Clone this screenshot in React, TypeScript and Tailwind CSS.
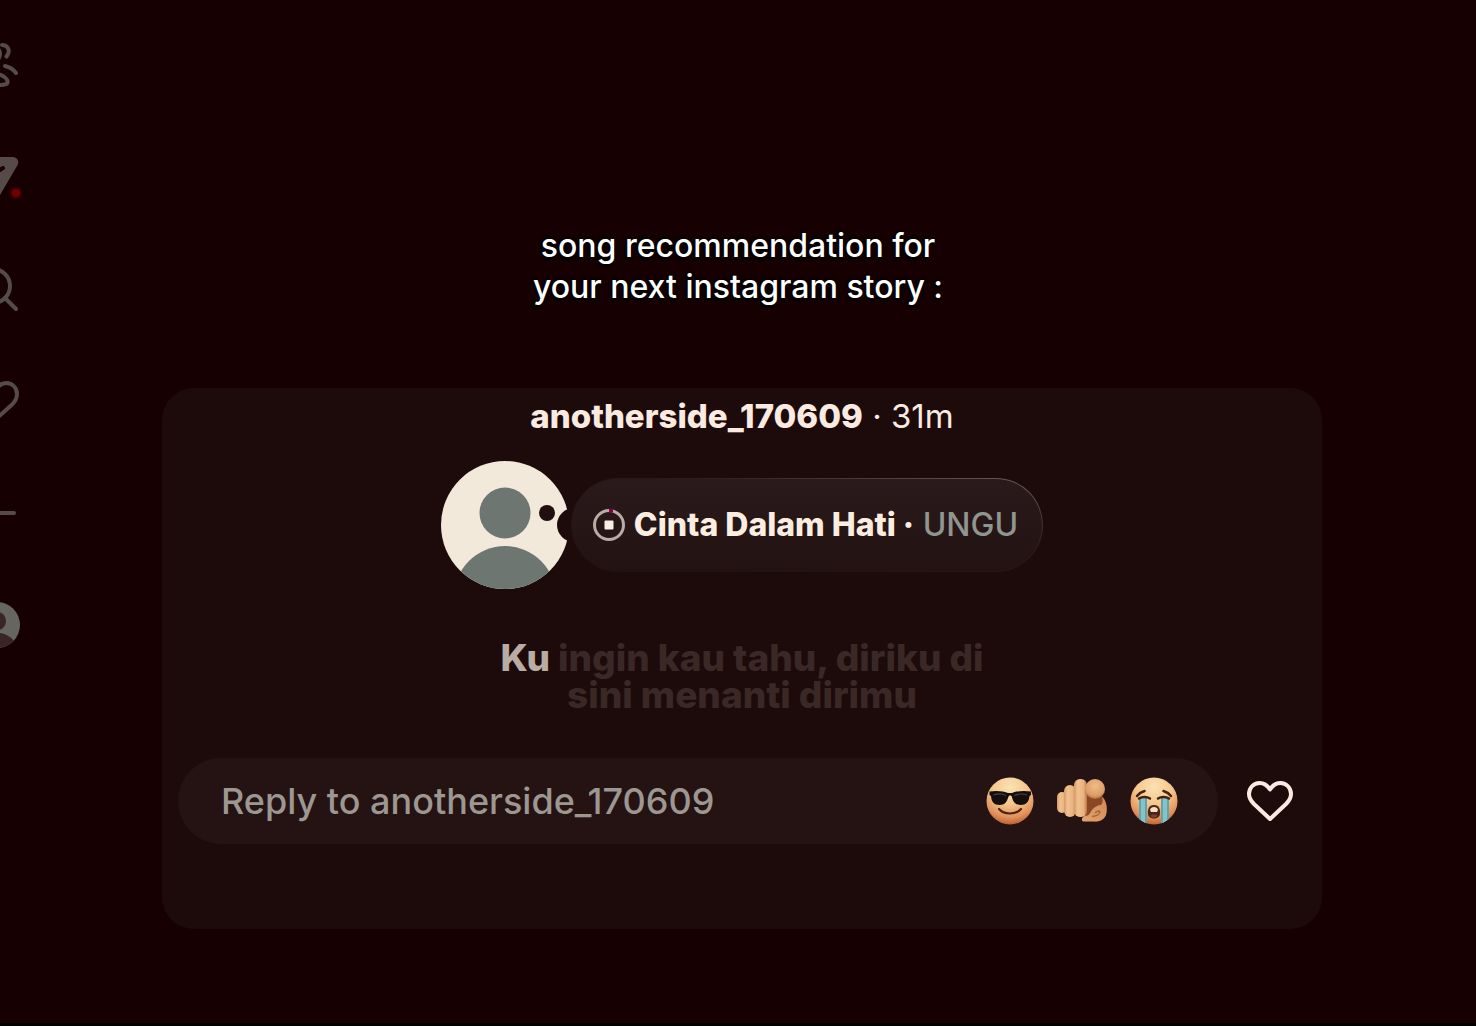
import type { ReactNode } from "react";

function NavButton({ label, children }: { label: string; children: ReactNode }) {
  return (
    <button type="button" aria-label={label} className="flex h-28 w-full items-center justify-end text-[#574b49]">
      <svg
        width="52"
        height="48"
        viewBox="-28 -24 52 48"
        fill="none"
        stroke="currentColor"
        strokeWidth="4"
        strokeLinecap="round"
        strokeLinejoin="round"
        className="shrink-0"
      >
        {children}
      </svg>
    </button>
  );
}

function SideNav() {
  return (
    <nav className="flex w-6 shrink-0 flex-col overflow-hidden pt-[9px]">
      <NavButton label="Friends">
        <circle cx="-8" cy="-11" r="8" />
        <path d="M2 -20C7 -20 9.500 -16 8.500 -12.500C8 -10.500 7 -9.500 6.500 -8.500M5 1C9.500 2 13.500 4.500 16 8M-20 16C-18 9 -11 7 -5 8C2 10 7 13 7.500 16.500C8 19 5 20 -1 20H-16C-19 20 -21 19 -20 16Z" />
      </NavButton>
      <NavButton label="Messages">
        <path
          d="M-22 -20H12C17.500 -20 20 -15.500 17 -11L-3 23C-5 26 -9 25 -10 22L-13 5L-25 -10C-28 -14 -26 -20 -22 -20Z"
          fill="currentColor"
          stroke="none"
        />
        <path d="M3 -9L-12 0" stroke="#160002" />
        <circle cx="16" cy="16" r="5" fill="#6e0007" stroke="#3c0004" strokeWidth="2" />
      </NavButton>
      <NavButton label="Search">
        <circle cx="-7" cy="-3" r="17" />
        <path d="M5 9L16 20" />
      </NavButton>
      <NavButton label="Activity">
        <path d="M-4 18L11 4.500C15 1 17 -3 17 -7C17 -13 12.500 -18 6.500 -18C2 -18 -2 -15 -4 -11C-6 -15 -10 -18 -14.500 -18C-20.500 -18 -25 -13 -25 -7C-25 -3 -23 1 -19 4.500Z" />
      </NavButton>
      <NavButton label="Menu">
        <path d="M-22 0H14" />
      </NavButton>
      <NavButton label="Profile">
        <circle cx="-3" cy="0" r="23" fill="#666661" stroke="none" />
        <circle cx="-3.500" cy="-4" r="9.500" fill="#382524" stroke="none" />
        <path d="M-19 17C-11 5 5 5 14 16C5 25 -11 25 -19 17Z" fill="#382524" stroke="none" />
      </NavButton>
    </nav>
  );
}

function Avatar() {
  return (
    <svg width="128" height="128" viewBox="0 0 128 128" role="img" aria-label="anotherside_170609" className="shrink-0">
      <defs>
        <clipPath id="avatar-round">
          <circle cx="64" cy="64" r="64" />
        </clipPath>
      </defs>
      <g clipPath="url(#avatar-round)">
        <rect width="128" height="128" fill="#f3e9db" />
        <circle cx="64" cy="52" r="25.500" fill="#6e7671" />
        <circle cx="64" cy="136" r="51" fill="#6e7671" />
      </g>
      <circle cx="133" cy="64" r="17" fill="#1d0b0b" />
      <circle cx="106" cy="52" r="8" fill="#210e0e" />
    </svg>
  );
}

function PlayingIcon() {
  return (
    <svg width="34" height="34" viewBox="0 0 34 34" fill="none" className="shrink-0">
      <circle cx="17" cy="17" r="14.500" stroke="#b8aba8" strokeWidth="3" />
      <path d="M17 2.500H21" stroke="#85003c" strokeWidth="4" />
      <rect x="12.500" y="12.500" width="9" height="9" rx="1" fill="#fbeee4" />
    </svg>
  );
}

function FaceGradient({ id }: { id: string }) {
  return (
    <radialGradient id={id} cx="0.5" cy="0.2" r="0.82">
      <stop offset="0" stopColor="#fae2b4" />
      <stop offset="0.45" stopColor="#f5c78c" />
      <stop offset="0.8" stopColor="#e0905a" />
      <stop offset="1" stopColor="#b9592b" />
    </radialGradient>
  );
}

function CoolFace() {
  return (
    <svg width="48" height="48" viewBox="0 0 48 48">
      <defs>
        <FaceGradient id="cool-face" />
      </defs>
      <circle cx="24" cy="24" r="23.500" fill="url(#cool-face)" />
      <path
        d="M3.500 14.500C10 13.300 18 14 22 16H26C30 14 38 13.300 45 14.500V18L43.500 19C43 25 40 28 34.500 28C29 28 27 24.500 25.800 19.500C25.300 18 23 18 22.500 19.500C21 24.500 19 28 13.500 28C8 28 5.500 25 5 19L3.500 18Z"
        fill="#150d0e"
      />
      <path d="M7.500 18C12 16.500 17 17 20 18.500M28.500 18.500C32 17 37 16.500 41 18" stroke="#4b4444" strokeWidth="1.200" fill="none" />
      <path d="M13 32C18 38 30 38 35 32" stroke="#4d2413" strokeWidth="2.200" fill="none" strokeLinecap="round" />
    </svg>
  );
}

function PointingHand() {
  return (
    <svg width="52" height="48" viewBox="0 0 52 48">
      <defs>
        <linearGradient id="hand-finger" x1="0" x2="1" y1="0" y2="0">
          <stop offset="0" stopColor="#d79a63" />
          <stop offset="0.3" stopColor="#f0c190" />
          <stop offset="0.75" stopColor="#e9b27d" />
          <stop offset="1" stopColor="#b97445" />
        </linearGradient>
        <radialGradient id="hand-tip" cx="0.5" cy="0.35" r="0.7">
          <stop offset="0" stopColor="#f0bd88" />
          <stop offset="0.7" stopColor="#dc9d66" />
          <stop offset="1" stopColor="#a55f34" />
        </radialGradient>
        <linearGradient id="hand-thumb" x1="0" x2="1" y1="1" y2="0">
          <stop offset="0" stopColor="#e2a56e" />
          <stop offset="1" stopColor="#cf8a55" />
        </linearGradient>
      </defs>
      <path d="M28 18H45C50 22 52 30 50 37C48 43 43 45 37 44H26L28 36Z" fill="#8a4924" />
      <path
        d="M46 20C50 23 52 31 50 38C48 43 43 45 37 44.500H27C25 43 26 40 29 39C33 39 34 36 36 33C38 30 42 28 45 28C47 26 47 23 46 20Z"
        fill="url(#hand-thumb)"
      />
      <path d="M39 36C41 34 43 33.500 44 35C43.500 38 40 39 36 39.500" stroke="#a9643a" strokeWidth="1.500" fill="none" />
      <rect x="1" y="15" width="10" height="21" rx="5" fill="url(#hand-finger)" />
      <rect x="8" y="8" width="12" height="32" rx="6" fill="url(#hand-finger)" />
      <rect x="18" y="2" width="13" height="38" rx="6" fill="url(#hand-finger)" />
      <ellipse cx="39" cy="12" rx="10" ry="10" fill="url(#hand-tip)" />
    </svg>
  );
}

function CryingFace() {
  return (
    <svg width="48" height="48" viewBox="0 0 48 48">
      <defs>
        <FaceGradient id="crying-face" />
        <clipPath id="crying-clip">
          <circle cx="24" cy="24" r="23.500" />
        </clipPath>
      </defs>
      <g clipPath="url(#crying-clip)">
        <rect width="48" height="48" fill="url(#crying-face)" />
        <rect x="9" y="21" width="8" height="27" fill="#5fa5b0" />
        <rect x="11" y="21" width="4" height="27" fill="#86c3c9" />
        <rect x="31" y="21" width="8" height="27" fill="#5fa5b0" />
        <rect x="33" y="21" width="4" height="27" fill="#86c3c9" />
      </g>
      <path
        d="M7 19C9 16.500 11 15 14.500 14M41 19C39 16.500 37 15 33.500 14M9 21.500C12 19.500 17 19.500 20 21.500M28 21.500C31 19.500 36 19.500 39 21.500"
        stroke="#46210f"
        strokeWidth="2.500"
        fill="none"
        strokeLinecap="round"
      />
      <path d="M24 28C29.500 28 30.500 33 30 37C29.500 43 18.500 43 18 37C17.500 33 18.500 28 24 28Z" fill="#4c2418" />
      <path d="M20 33C20.500 29 27.500 29 28 33L27 35H21Z" fill="#f2dfc4" />
      <path d="M20.500 39C22 37 26 37 27.500 39C26 41 22 41 20.500 39Z" fill="#84402c" />
    </svg>
  );
}

function HeartIcon() {
  return (
    <svg width="48" height="48" viewBox="0 0 48 48" fill="none" stroke="#fbeae3" strokeWidth="4" strokeLinecap="round" strokeLinejoin="round">
      <path d="M24 42L8 27C4.500 23.500 3 20.500 3 17C3 11 7.500 6 13.500 6C18 6 21.500 8.500 24 12.500C26.500 8.500 30 6 34.500 6C40.500 6 45 11 45 17C45 20.500 43.500 23.500 40 27Z" />
    </svg>
  );
}

function SongPill() {
  return (
    <div className="rounded-full bg-gradient-to-bl from-[#6d5c5d] via-[#2b1818] via-40% to-[#211010] p-px">
      <div className="flex h-[92px] items-center gap-2 rounded-full bg-gradient-to-b from-[#2b1a1b] to-[#231212] pr-6 pl-5 text-[32px] whitespace-nowrap">
        <PlayingIcon />
        <p className="font-medium text-[#8f958f]">
          <strong className="font-extrabold text-[#fbeee0]">Cinta Dalam Hati ·</strong> UNGU
        </p>
      </div>
    </div>
  );
}

function StoryCard() {
  return (
    <section className="rounded-4xl bg-[#1d0b0b] px-4 pt-2 pb-[85px]">
      <p className="text-center text-[33px] leading-10 text-[#fbeae0]">
        <strong className="font-extrabold">anotherside_170609</strong> · 31m
      </p>

      <div className="mt-[25px] flex items-center justify-center gap-0.5">
        <Avatar />
        <SongPill />
      </div>

      <p className="mt-[50px] text-center text-[37px] leading-[37px] font-extrabold text-[#3a2827]">
        <span className="text-[#b9aca2]">Ku</span> ingin kau tahu, diriku di
        <br />
        sini menanti dirimu
      </p>

      <form className="mt-[45px] flex items-center gap-7" onSubmit={(event) => event.preventDefault()}>
        <div className="flex h-[86px] min-w-0 flex-1 items-center rounded-full bg-[#251313] pr-10 pl-[43px]">
          <input
            type="text"
            aria-label="Reply to anotherside_170609"
            placeholder="Reply to anotherside_170609"
            className="h-full min-w-0 flex-1 bg-transparent text-[36px] font-medium text-[#fbeae0] outline-none placeholder:text-[#9c9791]"
          />
          <div className="flex items-center gap-[22px]">
            <button type="button" aria-label="React with sunglasses face">
              <CoolFace />
            </button>
            <button type="button" aria-label="React with pointing hand">
              <PointingHand />
            </button>
            <button type="button" aria-label="React with crying face">
              <CryingFace />
            </button>
          </div>
        </div>
        <button type="button" aria-label="Like" className="mr-3">
          <HeartIcon />
        </button>
      </form>
    </section>
  );
}

export default function App() {
  return (
    <div className="flex min-h-screen border-b-3 border-black bg-[#160002] font-['Inter',sans-serif]">
      <SideNav />
      <main className="min-w-0 flex-1 pt-[225px]">
        <h1 className="pr-6 text-center text-[32px] leading-[41px] font-medium text-white [text-shadow:0_0_3px_#000,0_0_4px_#000,0_2px_3px_#000]">
          song recommendation for
          <br />
          your next instagram story :
        </h1>
        <div className="mt-[81px] pr-[154px] pl-[138px]">
          <StoryCard />
        </div>
      </main>
    </div>
  );
}
